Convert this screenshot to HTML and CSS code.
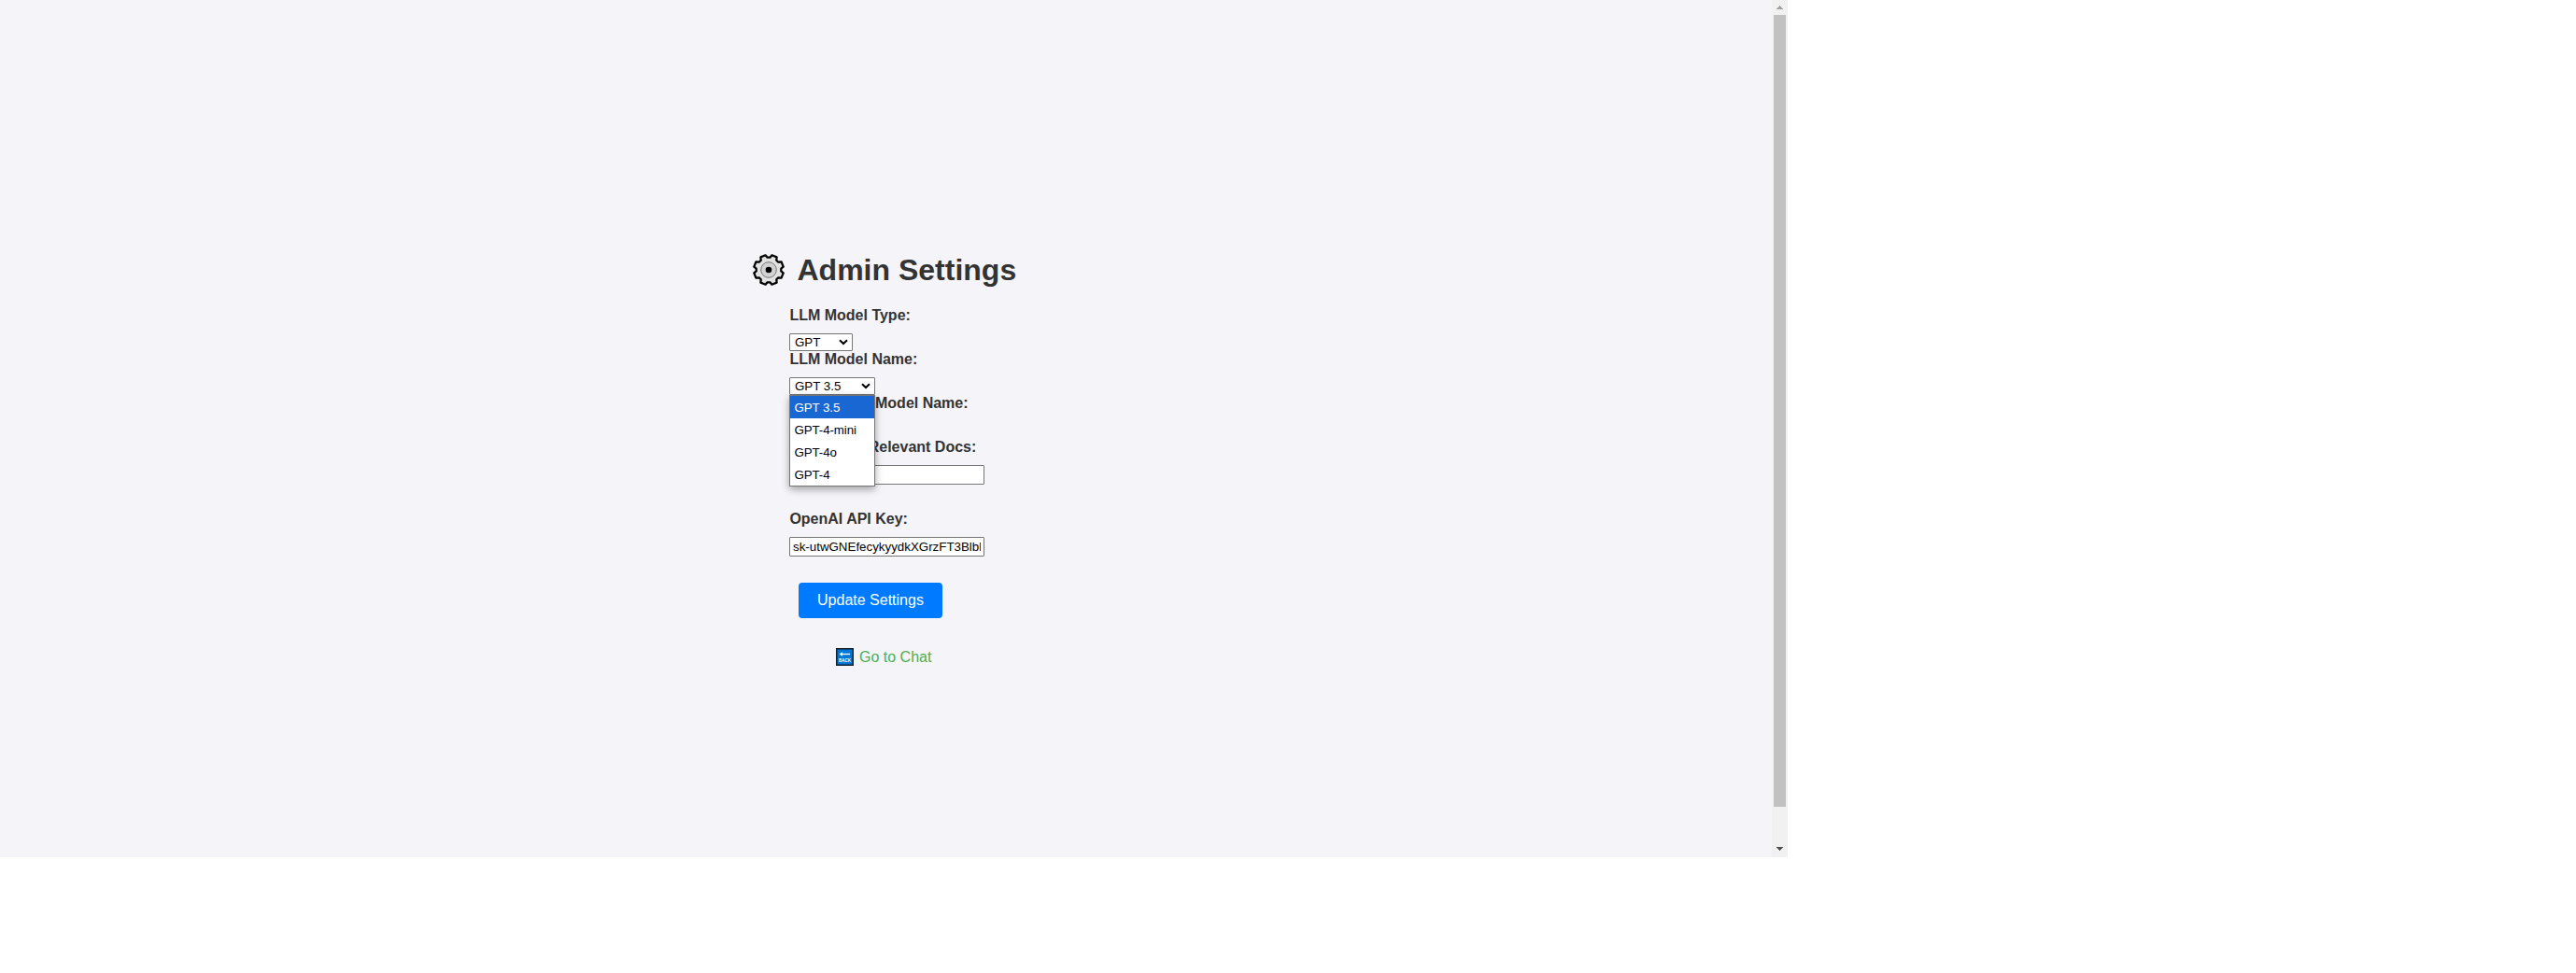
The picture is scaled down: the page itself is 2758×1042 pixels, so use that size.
FILE: index.html
```html
<!DOCTYPE html>
<html lang="en">
<head>
<meta charset="utf-8">
<title>Admin Settings</title>
<link rel="stylesheet" href="styles.css">
</head>
<body>
<div class="viewport">
  <main class="page">
    <h1 class="title">
      <svg class="gear" viewBox="0 0 34 34">
        <path d="M13.6 1.3 L15.6 3.7 H18.4 L20.4 1.3 L25.6 3.4 L25.3 6.7 L27.3 8.7 L30.6 8.4 L32.7 13.6 L30.3 15.6 V18.4 L32.7 20.4 L30.6 25.6 L27.3 25.3 L25.3 27.3 L25.6 30.6 L20.4 32.7 L18.4 30.3 H15.6 L13.6 32.7 L8.4 30.6 L8.7 27.3 L6.7 25.3 L3.4 25.6 L1.3 20.4 L3.7 18.4 V15.6 L1.3 13.6 L3.4 8.4 L6.7 8.7 L8.7 6.7 L8.4 3.4 Z" fill="#e2e2e2" stroke="#000" stroke-width="2.3" stroke-linejoin="round"/>
        <circle cx="17" cy="17" r="8.3" fill="#d2d2d2" stroke="#777" stroke-width="1"/>
        <circle cx="17" cy="17" r="3.3" fill="#000"/>
      </svg>
      <span>Admin Settings</span>
    </h1>
    <form class="form">
      <label class="label">LLM Model Type:</label>
      <div class="select select-type"><span>GPT</span><svg class="chevron" viewBox="0 0 10 7"><path d="M1 1.2 L5 5 L9 1.2"/></svg></div>
      <label class="label">LLM Model Name:</label>
      <div class="select select-name"><span>GPT 3.5</span><svg class="chevron" viewBox="0 0 10 7"><path d="M1 1.2 L5 5 L9 1.2"/></svg>
        <ul class="menu">
          <li class="option selected">GPT 3.5</li>
          <li class="option">GPT-4-mini</li>
          <li class="option">GPT-4o</li>
          <li class="option">GPT-4</li>
        </ul>
      </div>
      <label class="label label-embedding">Model Name:</label>
      <div class="select select-type"></div>
      <label class="label label-docs">Relevant Docs:</label>
      <input class="input" type="text">
      <label class="label">OpenAI API Key:</label>
      <input class="input" type="text" value="sk-utwGNEfecykyydkXGrzFT3BlbkFJ">
      <button class="submit" type="button">Update Settings</button>
    </form>
    <a class="chat">
      <svg class="back" viewBox="0 0 19 19">
        <rect x=".75" y=".75" width="17.5" height="17.5" fill="#0078d7" stroke="#12202e" stroke-width="1.5"/>
        <path d="M5 6.5 H15" fill="none" stroke="#fff" stroke-width="1.3"/>
        <path d="M3.5 6.5 L7 4.2 V8.8 Z"/>
        <text x="9.5" y="15.2" text-anchor="middle" textLength="13" lengthAdjust="spacingAndGlyphs">BACK</text>
      </svg>
      <span>Go to Chat</span>
    </a>
  </main>
  <div class="scrollbar">
    <svg class="arrow" viewBox="0 0 7 4"><path d="M3 0h1v1h1v1h1v1h1v1H0V3h1V2h1V1h1z" fill="#a3a3a3"/></svg>
    <div class="thumb"></div>
    <svg class="arrow" viewBox="0 0 7 4"><path d="M0 0h7v1H6v1H5v1H4v1H3V3H2V2H1V1H0z" fill="#505050"/></svg>
  </div>
</div>
</body>
</html>
```
FILE: styles.css
```css
* { box-sizing: border-box; }
body { margin: 0; background: #fff; font-family: "Liberation Sans", Arial, sans-serif; color: #333; }
.viewport { display: flex; width: 1914px; height: 918px; }
.page { flex: 1; background: #f4f4f9; padding-top: 269px; }
.title { display: flex; align-items: center; gap: 13.5px; height: 40px; margin: 0 0 20px 806px; font-size: 32px; line-height: 40px; }
.gear { width: 34px; height: 34px; }
.form { display: flex; flex-direction: column; align-items: flex-start; margin-left: 845px; }
.label { height: 18px; margin-bottom: 10px; padding-left: .4px; font-size: 16px; font-weight: bold; line-height: 18px; white-space: nowrap; }
.label-embedding { padding-left: 92px; }
.label-docs { padding-left: 84.7px; }
.select { position: relative; display: flex; align-items: center; justify-content: space-between; height: 19px; padding: 0 4px 0 5px; border: 1px solid #767676; border-radius: 1px; background: #fff; color: #000; font-size: 13.333px; line-height: 17px; }
.select-type { width: 68px; }
.select-name { width: 92px; }
.chevron { width: 10px; height: 7px; fill: none; stroke: #000; stroke-width: 2; }
.menu { position: absolute; z-index: 2; top: 18px; left: -1px; width: 92px; margin: 0; padding: 0; border: 1px solid #767676; background: #fff; list-style: none; letter-spacing: -.1px; box-shadow: 0 3px 8px rgba(0, 0, 0, .35); }
.option { height: 24px; padding-left: 4.5px; line-height: 25px; }
.selected { background: #1967d2; color: #fff; }
.input { width: 209px; height: 21px; margin: 0 0 28px; padding: 1px 3px; border: 1px solid #767676; border-radius: 1px; background: #fff; color: #000; font: 13.333px "Liberation Sans", Arial, sans-serif; }
.submit { width: 154px; height: 38px; margin-left: 10px; padding: 0; border: 0; border-radius: 4px; background: #007bff; color: #fff; font: 16px "Liberation Sans", Arial, sans-serif; }
.chat { display: flex; align-items: center; gap: 6px; height: 19px; margin: 32px 0 0 895px; color: #4caf50; font-size: 16px; line-height: 19px; }
.back { width: 19px; height: 19px; fill: #fff; font-size: 5px; font-weight: bold; }
.scrollbar { display: flex; flex-direction: column; align-items: center; width: 17px; padding: 6px 0 7px; background: #f1f1f1; }
.thumb { width: 13px; height: 848px; margin: 6px 0 auto; background: #c1c1c1; }
.arrow { width: 7px; height: 4px; shape-rendering: crispEdges; }
```
